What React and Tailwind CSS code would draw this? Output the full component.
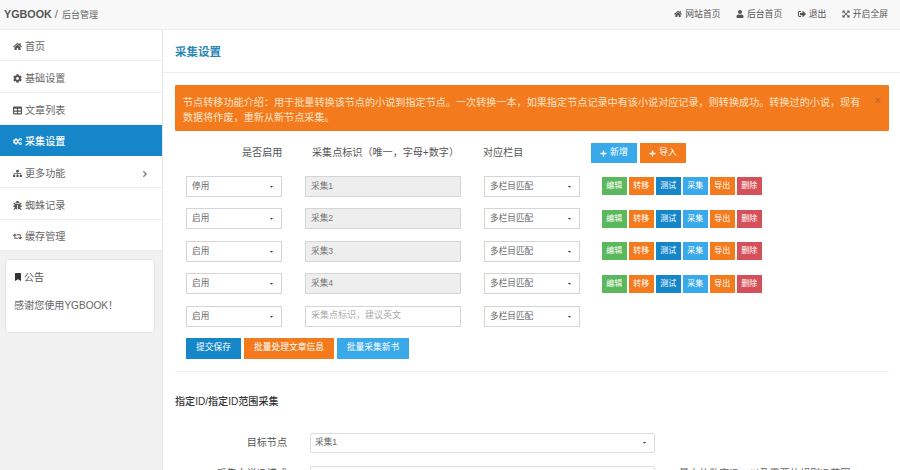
import React from 'react';
import { FaHome, FaCog, FaCogs, FaTable, FaSitemap, FaBug, FaRetweet, FaBookmark, FaUser, FaSignOutAlt, FaExpandArrowsAlt, FaPlus, FaAngleRight, FaCaretDown } from 'react-icons/fa';

const font = "font-['Liberation_Sans','Noto_Sans_CJK_SC',sans-serif]";

const nav = [
  [FaHome, '首页'], [FaCog, '基础设置'], [FaTable, '文章列表'], [FaCogs, '采集设置', true], [FaSitemap, '更多功能', false, true], [FaBug, '蜘蛛记录'], [FaRetweet, '缓存管理'],
];

function Select({ text }) {
  return (
    <div className="w-[96px] h-[21px] border border-[#d5d5d5] bg-white flex items-center justify-between pl-[5px] pr-[7px] text-[8.64px] text-[#666]">
      <span>{text}</span><FaCaretDown className="text-[#333] text-[5px]" />
    </div>
  );
}

function Row({ name, placeholder, top }) {
  return (
    <div className={`flex items-center ${top}`}>
      <Select text={name === '采集1' ? '停用' : '启用'} />
      <div className={`ml-[23px] w-[156px] h-[21px] border border-[#d5d5d5] flex items-center pl-[5px] ${placeholder ? 'bg-white text-[#aaa] text-[9px]' : 'bg-[#eeeeee] text-[#777] text-[8.64px]'}`}>{placeholder || name}</div>
      <div className="ml-[23px]"><Select text="多栏目匹配" /></div>
      {!placeholder && (
        <div className="ml-[22px] flex gap-[2.4px]">
          {[['编辑', 'bg-[#5cb85c]'], ['转移', 'bg-[#f37b1d]'], ['测试', 'bg-[#1587c9]'], ['采集', 'bg-[#39a9ea]'], ['导出', 'bg-[#f37b1d]'], ['删除', 'bg-[#d4505a]']].map(([t, c]) => (
            <span key={t} className={`${c} w-[24.6px] h-[18px] flex items-center justify-center text-white text-[8px]`}>{t}</span>
          ))}
        </div>
      )}
    </div>
  );
}

function TopLink({ Icon, text }) {
  return <span className="flex items-center gap-[3px]"><Icon className="text-[8px] text-[#555]" />{text}</span>;
}

export default function App() {
  return (
    <div className={`${font} w-[900px] h-[470px] overflow-hidden bg-white text-[#555] flex flex-col`}>
      <header className="h-[29.5px] shrink-0 bg-[#f8f8f8] border-b border-[#eeeeee] flex items-center justify-between pl-[4px] pr-[12px]">
        <div className="flex items-baseline gap-[3px]">
          <span className="text-[10.75px] font-bold text-[#555]">YGBOOK</span>
          <span className="text-[11.5px] text-[#666]">/</span>
          <span className="text-[9px] text-[#666] ml-[1px]">后台管理</span>
        </div>
        <div className="flex gap-[15.5px] text-[8.8px] text-[#555]">
          <TopLink Icon={FaHome} text="网站首页" />
          <TopLink Icon={FaUser} text="后台首页" />
          <TopLink Icon={FaSignOutAlt} text="退出" />
          <TopLink Icon={FaExpandArrowsAlt} text="开启全屏" />
        </div>
      </header>
      <div className="flex flex-1 min-h-0">
        <aside className="w-[163px] shrink-0 bg-[#f1f1f1] border-r border-[#e5e5e5]">
          {nav.map(([Icon, t, active, more]) => (
            <div key={t} className={`h-[31.7px] pt-[4px] flex items-center pl-[13px] pr-[12px] text-[10.08px] border-b ${active ? 'bg-[#1587c9] text-white font-medium border-[#1587c9]' : 'bg-white text-[#666] border-[#eeeeee]'}`}>
              <Icon className={`text-[9px] mr-[3px] ${active ? 'text-white' : 'text-[#555]'}`} />
              <span>{t}</span>
              {more && <FaAngleRight className="ml-auto text-[10px] text-[#888]" />}
            </div>
          ))}
          <div className="mx-[5px] mt-[7.5px] w-[150px] h-[74px] bg-white border border-[#e5e5e5] rounded-[3px] pl-[8px] pt-[10px]">
            <div className="flex items-center gap-[2px] text-[10.08px] text-[#555]"><FaBookmark className="text-[8px] text-[#333]" />公告</div>
            <div className="mt-[13px] text-[10.08px] text-[#666]">感谢您使用YGBOOK！</div>
          </div>
        </aside>
        <main className="flex-1 min-w-0">
          <div className="h-[43px] pt-[5px] border-b border-[#eeeeee] flex items-center pl-[12px] text-[11.5px] font-bold text-[#2a86b5]">采集设置</div>
          <div className="pl-[12px] pr-[11px]">
            <div className="mt-[12.5px] h-[46px] bg-[#f37b1d] rounded-[1px] pl-[8px] pr-[5px] pt-[10px] text-[10.12px] leading-[15px] text-[#fde3c8] relative">
              <div className="w-[684px]">节点转移功能介绍：用于批量转换该节点的小说到指定节点。一次转换一本，如果指定节点记录中有该小说对应记录，则转换成功。转换过的小说，现有数据将作废，重新从新节点采集。</div>
              <span className="absolute right-[8px] top-[8px] text-[11px] text-[#b8612a] leading-[14px]">×</span>
            </div>
            <div className="flex items-center mt-[11.5px] h-[21px] text-[10.08px] text-[#555]">
              <span className="ml-[67px] w-[42px] whitespace-nowrap">是否启用</span>
              <span className="ml-[28px] w-[148px] whitespace-nowrap">采集点标识（唯一，字母+数字）</span>
              <span className="ml-[23px] w-[60px] whitespace-nowrap">对应栏目</span>
              <span className="ml-[48px] bg-[#39a9ea] text-white w-[46px] h-[20px] flex items-center justify-center gap-[3px] text-[9px]"><FaPlus className="text-[7px]" />新增</span>
              <span className="ml-[3px] bg-[#f37b1d] text-white w-[46px] h-[20px] flex items-center justify-center gap-[3px] text-[9px]"><FaPlus className="text-[7px]" />导入</span>
            </div>
            <div className="pl-[11px]">
              <Row name="采集1" top="mt-[12px]" />
              <Row name="采集2" top="mt-[11.5px]" />
              <Row name="采集3" top="mt-[11.5px]" />
              <Row name="采集4" top="mt-[11.5px]" />
              <Row placeholder="采集点标识，建议英文" top="mt-[11.5px]" />
              <div className="flex mt-[11px] gap-[3px] text-white text-[8.75px]">
                <span className="bg-[#1587c9] w-[55px] h-[21px] flex items-center justify-center">提交保存</span>
                <span className="bg-[#f37b1d] w-[90px] h-[21px] flex items-center justify-center">批量处理文章信息</span>
                <span className="bg-[#39a9ea] w-[72px] h-[21px] flex items-center justify-center">批量采集新书</span>
              </div>
            </div>
            <div className="border-t border-[#f0f0f0] mt-[12px]" />
            <div className="mt-[22px] text-[10.08px] font-medium text-[#333]">指定ID/指定ID范围采集</div>
            <div className="flex items-center mt-[24px]">
              <span className="w-[112px] text-right text-[10.08px] text-[#555]">目标节点</span>
              <div className="ml-[23px] w-[345px] h-[20px] border border-[#ddd] rounded-[2px] flex items-center justify-between pl-[4px] pr-[7px] text-[8.64px] text-[#666]"><span>采集1</span><FaCaretDown className="text-[5px] text-[#333]" /></div>
            </div>
            <div className="flex items-start mt-[13px]">
              <span className="w-[112px] text-right text-[10.08px] text-[#555] whitespace-nowrap">采集小说ID模式</span>
              <div className="ml-[23px] w-[345px] h-[21px] border border-[#ddd] rounded-[2px]" />
              <span className="ml-[24px] text-[10.08px] text-[#666] whitespace-nowrap">最大的数字ID，以及需要的规则ID范围</span>
            </div>
          </div>
        </main>
      </div>
    </div>
  );
}
